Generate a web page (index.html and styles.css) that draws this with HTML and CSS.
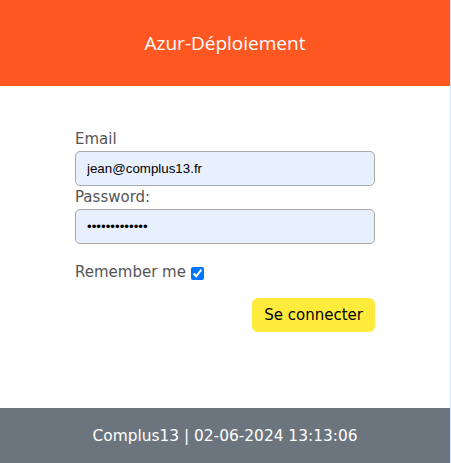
FILE: index.html
```html
<!DOCTYPE html>
<html lang="fr">
<head>
<meta charset="utf-8">
<title>Azur-Déploiement</title>
<link rel="stylesheet" href="styles.css">
</head>
<body>
<div class="page">
  <header class="topbar">
    <h1 class="title">Azur-Déploiement</h1>
  </header>
  <main class="main">
    <form class="login">
      <label class="label" for="email">Email</label>
      <input class="field" id="email" type="text" value="jean@complus13.fr">
      <label class="label" for="pwd">Password:</label>
      <input class="field" id="pwd" type="password" value="motdepasse123">
      <div class="remember">
        <span>Remember me</span>
        <input class="check" type="checkbox" checked>
      </div>
      <div class="actions">
        <button class="btn" type="button">Se connecter</button>
      </div>
    </form>
  </main>
  <footer class="footer">Complus13 | 02-06-2024 13:13:06</footer>
</div>
</body>
</html>
```
FILE: styles.css
```css
html, body {
  margin: 0;
  padding: 0;
  background: #ffffff;
}
.page {
  width: 450px;
  min-height: 463px;
  border-right: 1px solid #d6e2fb;
  display: flex;
  flex-direction: column;
}
.topbar {
  height: 86px;
  background: #ff5722;
  display: flex;
  align-items: center;
  justify-content: center;
}
.title {
  margin: 0;
  font-family: "Open Sans", sans-serif;
  font-weight: 400;
  font-size: 19px;
  color: #ffffff;
}
.main {
  flex: 1;
  display: flex;
  justify-content: center;
}
.login {
  width: 300px;
  padding-top: 42px;
  display: flex;
  flex-direction: column;
  font-family: "DejaVu Sans", Verdana, sans-serif;
  font-size: 15px;
  color: #555555;
}
.label {
  display: block;
  line-height: 23px;
}
.field {
  box-sizing: border-box;
  height: 35px;
  width: 300px;
  margin: 0;
  padding: 0 11px;
  border: 1px solid #a9a9a9;
  border-radius: 5px;
  background: #e8f0fe;
  font-family: "Liberation Sans", Arial, sans-serif;
  font-size: 13.33px;
  color: #000000;
  outline: none;
}
.remember {
  margin-top: 17px;
  display: flex;
  align-items: center;
  gap: 5px;
  line-height: 23px;
}
.check {
  margin: 1px 0 0 0;
  width: 13px;
  height: 13px;
}
.actions {
  margin-top: 14px;
  display: flex;
  justify-content: flex-end;
}
.btn {
  height: 34px;
  padding: 0 12px;
  border: none;
  border-radius: 6px;
  background: #ffeb3b;
  color: #000000;
  font-family: "DejaVu Sans", Verdana, sans-serif;
  font-size: 15px;
}
.footer {
  height: 55px;
  background: #6c757d;
  color: #ffffff;
  font-family: "DejaVu Sans", Verdana, sans-serif;
  font-size: 15.4px;
  display: flex;
  align-items: center;
  justify-content: center;
}
```
